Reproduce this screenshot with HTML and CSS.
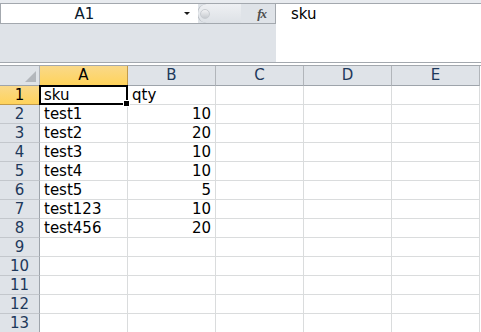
FILE: index.html
```html
<!DOCTYPE html>
<html lang="en">
<head>
    <meta charset="UTF-8">
    <title>Book1 - sheet</title>
    <link rel="stylesheet" href="styles.css">
</head>
<body>
    <div class="formula-area">
        <div class="left-side">
            <div class="name-row">
                <div class="name-box">
                    <span class="name-text">A1</span>
                    <span class="drop-arrow"></span>
                </div>
                <div class="splitter"><span class="knob"></span></div>
                <div class="fx-box"><span class="fx">fx</span></div>
            </div>
        </div>
        <div class="formula-input">sku</div>
    </div>
    <div class="formula-gap"></div>

    <div class="sheet">
        <div class="head corner"><span class="corner-mark"></span></div>
        <div class="head col active">A</div>
        <div class="head col">B</div>
        <div class="head col">C</div>
        <div class="head col">D</div>
        <div class="head col">E</div>
    </div>

    <div class="sheet" id="rows"></div>

    <script>
        const data = [
            ['sku', 'qty'],
            ['test1', 10],
            ['test2', 20],
            ['test3', 10],
            ['test4', 10],
            ['test5', 5],
            ['test123', 10],
            ['test456', 20],
        ];
        const rows = document.getElementById('rows');

        for (let r = 0; r < 13; r++) {
            const row = data[r] || [];
            let html = `<div class="head row-num${r === 0 ? ' active' : ''}">${r + 1}</div>`;
            for (let c = 0; c < 5; c++) {
                const val = row[c];
                const isNum = typeof val === 'number';
                const cls = ['cell'];
                if (isNum) cls.push('num');
                if (r === 0 && c === 0) cls.push('selected');
                html += `<div class="${cls.join(' ')}">${val === undefined ? '' : val}</div>`;
            }
            rows.insertAdjacentHTML('beforeend', html);
        }
    </script>
</body>
</html>
```

FILE: styles.css
```css
body {
    margin: 0;
    width: 481px;
    height: 332px;
    overflow: hidden;
    background: #ffffff;
    font-family: 'DejaVu Sans', sans-serif;
    font-size: 15px;
    color: #000000;
}

.formula-area {
    display: flex;
    height: 58px;
    margin-top: 3px;
    border-top: 1px solid #a3a8ae;
    border-bottom: 1px solid #a3a8ae;
    background: #dfe3e8;
    box-shadow: 0 -3px 0 #e8ebef;
}

.left-side {
    width: 276px;
    display: flex;
    flex-direction: column;
}

.name-row {
    display: flex;
    height: 19px;
    border-bottom: 1px solid #a3a8ae;
}

.name-box {
    width: 197px;
    background: #ffffff;
    border-left: 1px solid #a3a8ae;
    display: flex;
    align-items: center;
    position: relative;
}

.name-text {
    flex: 1;
    text-align: center;
    padding-right: 16px;
    color: #0a1a2e;
}

.drop-arrow {
    width: 0;
    height: 0;
    border-left: 3px solid transparent;
    border-right: 3px solid transparent;
    border-top: 3px solid #1a1a1a;
    margin-right: 8px;
}

.splitter {
    width: 43px;
    background: linear-gradient(#eef0f3, #dde1e6);
    border-radius: 10px 0 0 10px;
    border-left: 1px solid #b4b9bf;
    margin-left: -1px;
    display: flex;
    align-items: center;
}

.knob {
    width: 8px;
    height: 8px;
    margin-left: 2px;
    border-radius: 50%;
    background: linear-gradient(#f2f3f5, #c6cacf);
    border: 1px solid #c8ccd1;
}

.fx-box {
    flex: 1;
    border-right: 1px solid #a3a8ae;
    display: flex;
    justify-content: flex-end;
    align-items: center;
    padding-right: 9px;
}

.fx {
    font-family: 'Liberation Serif', serif;
    font-style: italic;
    font-weight: bold;
    font-size: 13px;
    color: #4d4d4d;
    letter-spacing: -1px;
}

.formula-input {
    flex: 1;
    background: #ffffff;
    padding: 1px 0 0 15px;
    line-height: 18px;
}

.formula-gap {
    height: 2px;
    background: #ffffff;
    border-bottom: 1px solid #a3a8ae;
}

.sheet {
    display: grid;
    grid-template-columns: 40px repeat(5, 88px);
}

.head {
    background: #dfe3e8;
    border-right: 1px solid #b1b5ba;
    border-bottom: 1px solid #9ea4ab;
    height: 19px;
    line-height: 19px;
    text-align: center;
    color: #1e395b;
    font-size: 15px;
}

.head.active {
    background: linear-gradient(#f9d98a, #ffd35b);
    border-bottom-color: #c29b4a;
    border-right-color: #c29b4a;
    color: #000000;
}

.corner {
    position: relative;
    border-right-color: #b1b5ba;
}

.corner-mark {
    position: absolute;
    right: 3px;
    bottom: 3px;
    width: 0;
    height: 0;
    border-left: 11px solid transparent;
    border-bottom: 11px solid #b3b7bc;
}

.row-num {
    height: 18px;
    line-height: 19px;
    border-bottom-color: #c3c7cc;
    border-right-color: #9ea4ab;
}

.row-num.active {
    border-bottom-color: #c29b4a;
    border-right-color: #9ea4ab;
}

.cell {
    height: 18px;
    line-height: 19px;
    border-right: 1px solid #dadcdd;
    border-bottom: 1px solid #dadcdd;
    padding: 0 4px;
    white-space: nowrap;
    overflow: visible;
}

.cell.num {
    text-align: right;
}

.cell.selected {
    position: relative;
}

.cell.selected::after {
    content: '';
    position: absolute;
    left: -1px;
    top: -1px;
    right: -1px;
    bottom: -1px;
    border: 2px solid #000000;
}

.cell.selected::before {
    content: '';
    position: absolute;
    right: -3px;
    bottom: -3px;
    width: 5px;
    height: 5px;
    background: #000000;
    border: 1px solid #ffffff;
    z-index: 1;
}
```
